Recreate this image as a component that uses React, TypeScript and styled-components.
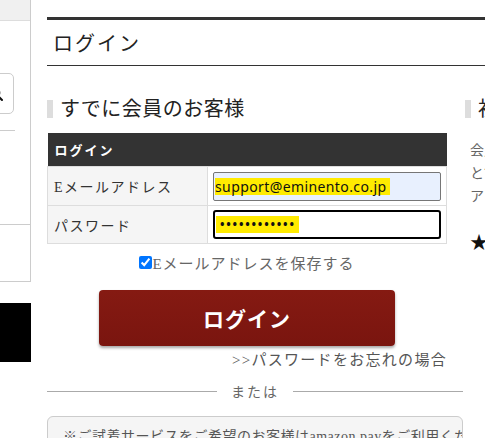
import styled, { createGlobalStyle } from 'styled-components'

const GlobalStyle = createGlobalStyle`
  html, body {
    margin: 0;
    padding: 0;
    background: #fff;
    overflow: hidden;
  }
  body {
    font-family: 'Liberation Serif', 'Noto Sans CJK JP', serif;
    color: #333;
  }
`

const Page = styled.div`
  display: flex;
  width: 485px;
  height: 438px;
  overflow: hidden;
`

const Sidebar = styled.aside`
  flex: 0 0 31px;
  display: flex;
  flex-direction: column;
`

const SideMenu = styled.div`
  height: 282px;
  border-right: 1px solid #ccc;
  border-bottom: 1px solid #ccc;
  box-sizing: border-box;
  display: flex;
  flex-direction: column;
`

const SideTop = styled.div`
  height: 20px;
  background: #f0f0f0;
  border-bottom: 1px solid #ddd;
`

const SearchBox = styled.div`
  margin-top: 52px;
  margin-left: -28px;
  width: 42px;
  height: 41px;
  box-sizing: border-box;
  border: 1px solid #ccc;
  border-radius: 5px;
  display: flex;
  align-items: center;
  justify-content: flex-end;
  padding-right: 9px;
`

const SideRule = styled.div`
  width: 15px;
  margin-top: 16px;
  border-top: 1px solid #ccc;
`

const SideSection = styled.div`
  margin-top: 93px;
  border-top: 1px solid #ccc;
`

const SideBlock = styled.div`
  margin-top: 21px;
  height: 59px;
  background: #000;
`

const Main = styled.main`
  flex: 1;
  padding-left: 16px;
  min-width: 0;
`

const TitleBar = styled.h1`
  margin: 17px -40px 0 0;
  height: 45px;
  border-top: 3px solid #333;
  border-bottom: 1px solid #333;
  display: flex;
  align-items: center;
  padding-left: 6px;
  font-size: 20px;
  font-weight: 400;
  letter-spacing: 2px;
  color: #222;
`

const Columns = styled.div`
  display: flex;
  margin-top: 34px;
`

const LeftCol = styled.section`
  flex: 0 0 416px;
  min-width: 0;
`

const RightCol = styled.section`
  flex: 0 0 300px;
  min-width: 0;
  margin-left: 2px;
`

const SectionHeading = styled.h2`
  margin: 0;
  height: 18px;
  line-height: 18px;
  border-left: 6px solid #ddd;
  padding-left: 7px;
  font-size: 20px;
  font-weight: 400;
  color: #222;
  letter-spacing: 0.5px;
  white-space: nowrap;
`

const Form = styled.div`
  width: 400px;
`

const LoginTable = styled.table`
  margin-top: 15px;
  width: 400px;
  border-collapse: collapse;
`

const HeadCell = styled.th`
  height: 33px;
  background: #333;
  color: #fff;
  text-align: left;
  padding: 0 0 0 7px;
  font-size: 13px;
  font-weight: 700;
  letter-spacing: 2px;
`

const LabelCell = styled.td`
  width: 160px;
  box-sizing: border-box;
  background: #f5f5f5;
  border: 1px solid #ddd;
  padding: 0 0 0 6px;
  font-size: 14px;
  letter-spacing: 1.5px;
  color: #333;
`

const FieldCell = styled.td<{ $h: number }>`
  height: ${p => p.$h}px;
  border: 1px solid #ddd;
  padding: 0 0 0 5px;
`

const FakeInput = styled.div<{ $focused?: boolean }>`
  width: 228px;
  height: 29px;
  box-sizing: border-box;
  display: flex;
  align-items: center;
  background: ${p => (p.$focused ? '#fff' : '#e8f0fe')};
  border: ${p => (p.$focused ? '2px solid #000' : '1px solid #767676')};
  border-radius: ${p => (p.$focused ? '3px' : '2px')};
  padding-left: 1px;
  font-family: 'Noto Sans', 'Noto Sans CJK JP', sans-serif;
  font-size: 14px;
  color: #111;
`

const Highlight = styled.mark<{ $dots?: boolean }>`
  background: #ffeb00;
  color: #111;
  padding: 0 3px 0 ${p => (p.$dots ? '4px' : '0')};
  line-height: 17px;
  letter-spacing: ${p => (p.$dots ? '1.8px' : '0.4px')};
  font-size: ${p => (p.$dots ? '12px' : '14px')};
  font-weight: ${p => (p.$dots ? 700 : 400)};
`

const CheckRow = styled.label`
  margin-top: 8px;
  display: flex;
  justify-content: center;
  align-items: center;
  font-size: 15px;
  letter-spacing: 1px;
  color: #666;

  input {
    accent-color: #0075ff;
    margin: 0;
    width: 13px;
    height: 13px;
  }
`

const LoginButton = styled.button`
  display: block;
  margin: 17px auto 0;
  width: 296px;
  height: 56px;
  border: none;
  border-radius: 4px;
  background: linear-gradient(#851a12, #7a150f);
  box-shadow: 0 2px 3px rgba(0, 0, 0, 0.35);
  color: #fff;
  font-family: 'Noto Sans CJK JP', sans-serif;
  font-size: 21px;
  font-weight: 700;
  letter-spacing: 1px;
  cursor: pointer;
`

const Forgot = styled.a`
  display: block;
  margin-top: 2px;
  text-align: right;
  font-size: 15px;
  letter-spacing: 1.3px;
  color: #555;
  text-decoration: none;
`

const Divider = styled.div`
  margin-top: 12px;
  display: flex;
  align-items: center;
  gap: 14px;
  font-size: 14px;
  letter-spacing: 2px;
  color: #666;

  &::before,
  &::after {
    content: '';
    flex: 1;
    border-top: 1px solid #aaa;
  }
`

const NoteBox = styled.div`
  margin-top: 15px;
  border: 1px solid #ccc;
  border-radius: 6px;
  background: #f5f5f5;
  padding: 8px 15px;
  font-size: 14px;
  letter-spacing: 0.5px;
  color: #555;
  white-space: nowrap;
  overflow: hidden;
`

const Intro = styled.p`
  margin: 21px 0 0 5px;
  font-size: 14px;
  line-height: 23px;
  color: #666;
  white-space: nowrap;
`

const Star = styled.p`
  margin: 20px 0 0 5px;
  font-size: 18px;
  color: #111;
`

const SearchIcon = () => (
  <svg width="16" height="16" viewBox="0 0 24 24" fill="none" stroke="#111" strokeWidth="3" strokeLinecap="round">
    <circle cx="10" cy="10" r="7" />
    <line x1="15" y1="15" x2="21" y2="21" />
  </svg>
)

export default function App() {
  return (
    <Page>
      <GlobalStyle />
      <Sidebar>
        <SideMenu>
          <SideTop />
          <SearchBox>
            <SearchIcon />
          </SearchBox>
          <SideRule />
          <SideSection />
        </SideMenu>
        <SideBlock />
      </Sidebar>
      <Main>
        <TitleBar>ログイン</TitleBar>
        <Columns>
          <LeftCol>
            <SectionHeading>すでに会員のお客様</SectionHeading>
            <Form>
              <LoginTable>
                <thead>
                  <tr>
                    <HeadCell colSpan={2}>ログイン</HeadCell>
                  </tr>
                </thead>
                <tbody>
                  <tr>
                    <LabelCell>Eメールアドレス</LabelCell>
                    <FieldCell $h={38}>
                      <FakeInput>
                        <Highlight>support@eminento.co.jp</Highlight>
                      </FakeInput>
                    </FieldCell>
                  </tr>
                  <tr>
                    <LabelCell>パスワード</LabelCell>
                    <FieldCell $h={37}>
                      <FakeInput $focused>
                        <Highlight $dots>••••••••••••</Highlight>
                      </FakeInput>
                    </FieldCell>
                  </tr>
                </tbody>
              </LoginTable>
              <CheckRow>
                <input type="checkbox" defaultChecked />
                Eメールアドレスを保存する
              </CheckRow>
              <LoginButton>ログイン</LoginButton>
              <Forgot href="#">&gt;&gt;パスワードをお忘れの場合</Forgot>
            </Form>
            <Divider>または</Divider>
            <NoteBox>※ご試着サービスをご希望のお客様はamazon payをご利用ください。</NoteBox>
          </LeftCol>
          <RightCol>
            <SectionHeading>初めてのお客様</SectionHeading>
            <Intro>
              会員登録をしていただくと、
              <br />
              とても便利にお買い物ができます。
              <br />
              アカウントを作成してください。
            </Intro>
            <Star>★</Star>
          </RightCol>
        </Columns>
      </Main>
    </Page>
  )
}
